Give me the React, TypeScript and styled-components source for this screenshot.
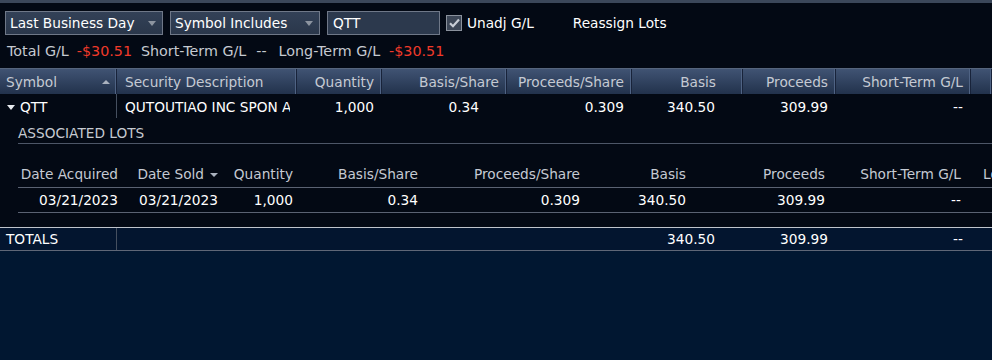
import React from "react";
import styled, { createGlobalStyle } from "styled-components";

const Global = createGlobalStyle`
  html, body { margin: 0; padding: 0; }
  body {
    background: #011731;
    font-family: "DejaVu Sans", Verdana, sans-serif;
    font-size: 13.7px;
    color: #ffffff;
    width: 992px;
    height: 360px;
    overflow: hidden;
  }
`;

const Page = styled.div`
  width: 992px;
  height: 360px;
  display: flex;
  flex-direction: column;
  background: #011731;
`;

const Upper = styled.div`
  background: #030914;
  display: flex;
  flex-direction: column;
`;

const TopStrip = styled.div`
  height: 3px;
  background: #3b475a;
`;

const Toolbar = styled.div`
  display: flex;
  align-items: center;
  gap: 7px;
  padding: 8px 5px 0 5px;
  height: 24px;
`;

const Select = styled.div<{ $w: number }>`
  width: ${(p) => p.$w}px;
  height: 24px;
  box-sizing: border-box;
  border: 1px solid #6f7888;
  background: linear-gradient(#334157, #2a374b);
  display: flex;
  align-items: center;
  justify-content: space-between;
  padding: 0 6px 0 4px;
  color: #ffffff;
  white-space: nowrap;
`;

const Caret = styled.span`
  width: 0;
  height: 0;
  border-left: 4.5px solid transparent;
  border-right: 4.5px solid transparent;
  border-top: 5px solid #8c94a0;
`;

const Input = styled.div`
  width: 113px;
  height: 24px;
  box-sizing: border-box;
  border: 1px solid #6f7888;
  background: #2c394d;
  display: flex;
  align-items: center;
  padding: 0 5px;
  color: #ffffff;
`;

const CheckLabel = styled.div`
  display: flex;
  align-items: center;
  gap: 5px;
  margin-left: -1px;
  color: #ffffff;
`;

const CheckBox = styled.span`
  width: 16px;
  height: 16px;
  box-sizing: border-box;
  border: 1px solid #8a919c;
  background: #3d4757;
  display: flex;
  align-items: center;
  justify-content: center;
`;

const LinkText = styled.span`
  margin-left: 32px;
  color: #ffffff;
`;

const Summary = styled.div`
  display: flex;
  align-items: center;
  padding: 0 7px;
  height: 16px;
  margin-top: 8px;
  margin-bottom: 9px;
  font-size: 14.3px;
  color: #c6cad1;
  white-space: nowrap;
`;

const Part = styled.span<{ $red?: boolean; $ml?: number }>`
  color: ${(p) => (p.$red ? "#f03a2a" : "#c6cad1")};
  margin-left: ${(p) => p.$ml ?? 0}px;
`;

const MAIN_COLS = "117px 180px 85px 125px 125px 111px 93px 135px 1fr";

const HeaderRow = styled.div`
  display: grid;
  grid-template-columns: ${MAIN_COLS};
  height: 26px;
  background: linear-gradient(#405373, #22324c);
  border-top: 1px solid #56657d;
  box-sizing: border-box;
`;

const HCell = styled.div<{ $align?: "left" | "right"; $pad?: number }>`
  display: flex;
  align-items: center;
  justify-content: ${(p) => (p.$align === "left" ? "space-between" : "flex-end")};
  padding: ${(p) => (p.$align === "left" ? `0 7px 0 ${p.$pad ?? 6}px` : `0 ${p.$pad ?? 8}px 0 0`)};
  color: #c5cad3;
  white-space: nowrap;
  overflow: hidden;
  box-shadow: inset -1px 0 #18233a, inset -2px 0 #4f6384;
`;

const SortUp = styled.span`
  width: 0;
  height: 0;
  border-left: 4px solid transparent;
  border-right: 4px solid transparent;
  border-bottom: 4px solid #aab2bf;
`;

const SortDown = styled.span`
  display: inline-block;
  width: 0;
  height: 0;
  border-left: 4px solid transparent;
  border-right: 4px solid transparent;
  border-top: 4px solid #aab2bf;
  margin-left: 6px;
  vertical-align: middle;
`;

const DataRow = styled.div`
  display: grid;
  grid-template-columns: ${MAIN_COLS};
  height: 24px;
`;

const DCell = styled.div<{ $align?: "left" | "right"; $pad?: number; $divider?: boolean; $shift?: number }>`
  display: flex;
  align-items: center;
  justify-content: ${(p) => (p.$align === "left" ? "flex-start" : "flex-end")};
  padding: ${(p) =>
    p.$align === "left"
      ? `${p.$shift ?? 0}px 0 0 ${p.$pad ?? 8}px`
      : `${p.$shift ?? 0}px ${p.$pad ?? 8}px 0 0`};
  white-space: nowrap;
  overflow: hidden;
  color: #ffffff;
  border-right: ${(p) => (p.$divider ? "1px solid #454f5f" : "none")};
`;

const Clip = styled.span`
  display: block;
  width: 165px;
  overflow: hidden;
  white-space: nowrap;
`;

const Expander = styled.span`
  width: 0;
  height: 0;
  border-left: 4px solid transparent;
  border-right: 4px solid transparent;
  border-top: 5px solid #e8ebef;
  margin: 0 5px 0 0;
`;

const Lots = styled.div`
  margin-left: 18px;
  display: flex;
  flex-direction: column;
`;

const LotsTitle = styled.div`
  height: 26px;
  box-sizing: border-box;
  padding-top: 4px;
  display: flex;
  align-items: center;
  color: #c6cad1;
  border-bottom: 1px solid #4d5667;
`;

const LOT_COLS = "104px 100px 75px 125px 162px 106px 139px 136px 1fr";

const LotHeader = styled.div`
  display: grid;
  grid-template-columns: ${LOT_COLS};
  height: 44px;
  align-items: end;
  padding-bottom: 5px;
  box-sizing: border-box;
  border-bottom: 1px solid #5a6272;
`;

const LotRow = styled.div`
  display: grid;
  grid-template-columns: ${LOT_COLS};
  height: 25px;
  align-items: center;
  box-sizing: border-box;
  border-bottom: 1px solid #5a6272;
`;

const LCell = styled.div<{ $head?: boolean; $left?: boolean }>`
  text-align: ${(p) => (p.$left ? "left" : "right")};
  padding: ${(p) => (p.$left ? "0 0 0 18px" : "0 4px 0 0")};
  color: ${(p) => (p.$head ? "#c5cad3" : "#ffffff")};
  white-space: nowrap;
  overflow: hidden;
`;

const Spacer = styled.div`
  height: 14px;
`;

const TotalsRow = styled.div`
  display: grid;
  grid-template-columns: ${MAIN_COLS};
  height: 24px;
  box-sizing: border-box;
  border-top: 1px solid #bfc4cc;
  border-bottom: 1px solid #5f6777;
  background: #03152f;
`;

const CheckIcon = () => (
  <svg width="11" height="10" viewBox="0 0 11 10">
    <path d="M1 5.2 L4 8.2 L10 1.5" fill="none" stroke="#c9ced6" strokeWidth="2.2" />
  </svg>
);

export default function App() {
  return (
    <>
      <Global />
      <Page>
        <Upper>
          <TopStrip />
          <Toolbar>
            <Select $w={158}>
              <span>Last Business Day</span>
              <Caret />
            </Select>
            <Select $w={150}>
              <span>Symbol Includes</span>
              <Caret />
            </Select>
            <Input>QTT</Input>
            <CheckLabel>
              <CheckBox>
                <CheckIcon />
              </CheckBox>
              <span>Unadj G/L</span>
            </CheckLabel>
            <LinkText>Reassign Lots</LinkText>
          </Toolbar>
          <Summary>
            <Part>Total G/L</Part>
            <Part $red $ml={8}>-$30.51</Part>
            <Part $ml={9}>Short-Term G/L</Part>
            <Part $ml={10}>--</Part>
            <Part $ml={12}>Long-Term G/L</Part>
            <Part $red $ml={9}>-$30.51</Part>
          </Summary>
          <HeaderRow>
            <HCell $align="left">
              <span>Symbol</span>
              <SortUp />
            </HCell>
            <HCell $align="left" $pad={8}>Security Description</HCell>
            <HCell>Quantity</HCell>
            <HCell>Basis/Share</HCell>
            <HCell>Proceeds/Share</HCell>
            <HCell $pad={27}>Basis</HCell>
            <HCell>Proceeds</HCell>
            <HCell>Short-Term G/L</HCell>
            <HCell />
          </HeaderRow>
          <DataRow>
            <DCell $align="left" $pad={7} $shift={2} $divider>
              <Expander />
              QTT
            </DCell>
            <DCell $align="left" $shift={2}>
              <Clip>QUTOUTIAO INC SPON ADR</Clip>
            </DCell>
            <DCell $shift={2}>1,000</DCell>
            <DCell $shift={2} $pad={28}>0.34</DCell>
            <DCell $shift={2}>0.309</DCell>
            <DCell $shift={2} $pad={28}>340.50</DCell>
            <DCell $shift={2}>309.99</DCell>
            <DCell $shift={2}>--</DCell>
            <DCell />
          </DataRow>
          <Lots>
            <LotsTitle>ASSOCIATED LOTS</LotsTitle>
            <LotHeader>
              <LCell $head>Date Acquired</LCell>
              <LCell $head>
                Date Sold
                <SortDown />
              </LCell>
              <LCell $head>Quantity</LCell>
              <LCell $head>Basis/Share</LCell>
              <LCell $head>Proceeds/Share</LCell>
              <LCell $head>Basis</LCell>
              <LCell $head>Proceeds</LCell>
              <LCell $head>Short-Term G/L</LCell>
              <LCell $head $left>Long-Term G/L</LCell>
            </LotHeader>
            <LotRow>
              <LCell>03/21/2023</LCell>
              <LCell>03/21/2023</LCell>
              <LCell>1,000</LCell>
              <LCell>0.34</LCell>
              <LCell>0.309</LCell>
              <LCell>340.50</LCell>
              <LCell>309.99</LCell>
              <LCell>--</LCell>
              <LCell $left />
            </LotRow>
            <Spacer />
          </Lots>
        </Upper>
        <TotalsRow>
          <DCell $align="left" $pad={6} $divider>TOTALS</DCell>
          <DCell />
          <DCell />
          <DCell />
          <DCell />
          <DCell $pad={28}>340.50</DCell>
          <DCell>309.99</DCell>
          <DCell>--</DCell>
          <DCell />
        </TotalsRow>
      </Page>
    </>
  );
}
